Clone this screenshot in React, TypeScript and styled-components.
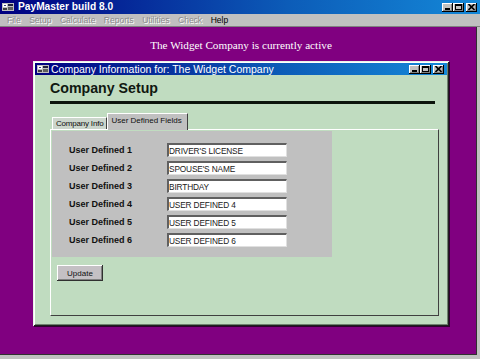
import React from 'react';
import styled, { createGlobalStyle } from 'styled-components';

const Global = createGlobalStyle`
  html, body { margin: 0; padding: 0; background: #c0c0c0; }
  body { width: 480px; height: 359px; overflow: hidden; font-family: "Liberation Sans", Arial, sans-serif; }
  * { box-sizing: border-box; }
`;

const Screen = styled.div`
  width: 480px;
  height: 359px;
  display: flex;
  flex-direction: column;
  background: #c0c0c0;
`;

const TitleBar = styled.div<{ $h: number; $size: number; $bold?: boolean }>`
  height: ${p => p.$h}px;
  flex: none;
  display: flex;
  align-items: center;
  padding: 0 3px 0 2px;
  background: linear-gradient(90deg, #000080 0%, #0c5cb8 60%, #1488d8 100%);
  color: #fff;
  font-size: ${p => p.$size}px;
  font-weight: ${p => (p.$bold ? 700 : 400)};
  white-space: nowrap;
`;

const TitleText = styled.span<{ $gap: number }>`
  margin-left: ${p => p.$gap}px;
  line-height: 1;
`;

const Controls = styled.div`
  margin-left: auto;
  display: flex;
  align-items: center;
`;

const WinButton = styled.div<{ $gap?: number }>`
  width: 11px;
  height: 9px;
  margin-left: ${p => p.$gap ?? 0}px;
  background: #c0c0c0;
  box-shadow: inset -1px -1px #000, inset 1px 1px #fff, inset -2px -2px #808080;
  display: flex;
  align-items: center;
  justify-content: center;
`;

const MenuBar = styled.div`
  height: 13px;
  flex: none;
  display: flex;
  align-items: center;
  gap: 8.5px;
  padding-left: 7px;
  font-size: 8.5px;
  border-bottom: 1px solid #808080;
`;

const MenuItem = styled.span<{ $disabled?: boolean }>`
  color: ${p => (p.$disabled ? '#8c8c8c' : '#000')};
  text-shadow: ${p => (p.$disabled ? '1px 1px 0 #fff' : 'none')};
  line-height: 1;
`;

const MdiClient = styled.div`
  flex: 1;
  margin: 0 3px 4px 0;
  background: #800080;
  border-right: 1px solid #303030;
  border-bottom: 1px solid #303030;
  display: flex;
  flex-direction: column;
`;

const Banner = styled.div`
  padding-top: 12px;
  padding-left: 6px;
  height: 34px;
  text-align: center;
  font-family: "Liberation Serif", "Times New Roman", serif;
  font-size: 11.2px;
  line-height: 13px;
  color: #fff;
`;

const ChildWindow = styled.div`
  margin-left: 33px;
  width: 416px;
  height: 265px;
  padding: 2px;
  background: #c0dcc0;
  box-shadow: inset 1px 1px #e8f4e8, inset -1px -1px #202020, inset 2px 2px #ffffff, inset -2px -2px #708070,
    1px 1px 0 #300030;
  display: flex;
  flex-direction: column;
`;

const Content = styled.div`
  flex: 1;
  padding: 5px 0 0 15px;
  display: flex;
  flex-direction: column;
  align-items: flex-start;
`;

const Heading = styled.div`
  font-size: 14.2px;
  font-weight: 700;
  line-height: 16px;
  color: #101810;
`;

const Rule = styled.div`
  margin-top: 5px;
  width: 385px;
  height: 3px;
  background: #0c140c;
`;

const TabStrip = styled.div`
  margin-top: 9px;
  margin-left: 2px;
  height: 16px;
  display: flex;
  align-items: flex-end;
  position: relative;
  z-index: 1;
`;

const Tab = styled.div<{ $active?: boolean }>`
  height: ${p => (p.$active ? 17 : 12)}px;
  margin-bottom: ${p => (p.$active ? -1 : 0)}px;
  padding: ${p => (p.$active ? '2px 5px 0 3px' : '1px 3px 0 3px')};
  background: ${p => (p.$active ? '#c0c0c0' : '#ccd6cc')};
  border-top: 1px solid #fff;
  border-left: 1px solid #fff;
  border-right: 1px solid #404040;
  font-size: 8px;
  letter-spacing: ${p => (p.$active ? '0' : '-0.2px')};
  line-height: 10px;
  color: #101010;
  white-space: nowrap;
`;

const TabPage = styled.div`
  width: 389px;
  height: 187px;
  border-top: 1px solid #fff;
  border-left: 1px solid #fff;
  border-right: 1px solid #404040;
  border-bottom: 1px solid #404040;
  padding: 1px 0 0 1px;
`;

const FieldPanel = styled.div`
  width: 280px;
  height: 126px;
  background: #c0c0c0;
  padding: 12px 0 0 17px;
  display: grid;
  grid-template-columns: 98px 120px;
  grid-auto-rows: 14px;
  row-gap: 4px;
`;

const FieldLabel = styled.div`
  align-self: center;
  font-size: 9px;
  font-weight: 700;
  color: #101010;
  white-space: nowrap;
`;

const FieldInput = styled.input`
  width: 120px;
  height: 14px;
  margin: 0;
  padding: 0;
  background: #fff;
  border-top: 2px solid #606060;
  border-left: 2px solid #606060;
  border-right: 1px solid #e0e0e0;
  border-bottom: 1px solid #e0e0e0;
  font-family: "Liberation Sans", Arial, sans-serif;
  font-size: 8.3px;
  letter-spacing: -0.15px;
  color: #202020;
  outline: none;
`;

const UpdateButton = styled.button`
  margin: 8px 0 0 5px;
  width: 46px;
  height: 16px;
  padding: 0;
  background: #c4c0c4;
  border: none;
  box-shadow: inset -1px -1px #303030, inset 1px 1px #fff, inset -2px -2px #808080;
  font-family: "Liberation Sans", Arial, sans-serif;
  font-size: 8px;
  color: #101010;
`;

const AppIcon = () => (
  <svg width="12" height="10" viewBox="0 0 12 10">
    <rect x="0" y="1" width="12" height="8" fill="#c0c0c0" />
    <rect x="1" y="2" width="4" height="3" fill="#fff" />
    <rect x="2" y="3" width="2" height="1" fill="#404080" />
    <rect x="6" y="2" width="5" height="2" fill="#202040" />
    <rect x="6" y="5" width="5" height="3" fill="#606060" />
    <rect x="1" y="6" width="4" height="2" fill="#404040" />
  </svg>
);

const MinGlyph = () => (
  <svg width="6" height="5" viewBox="0 0 6 5">
    <rect x="0" y="3" width="5" height="2" fill="#000" />
  </svg>
);
const MaxGlyph = () => (
  <svg width="7" height="6" viewBox="0 0 7 6">
    <rect x="0.5" y="0.5" width="6" height="5" fill="none" stroke="#000" strokeWidth="1" />
    <rect x="0" y="0" width="7" height="2" fill="#000" />
  </svg>
);
const CloseGlyph = () => (
  <svg width="7" height="6" viewBox="0 0 7 6">
    <path d="M0.5 0 L6.5 6 M6.5 0 L0.5 6" stroke="#000" strokeWidth="1.6" />
  </svg>
);

const WindowControls = () => (
  <Controls>
    <WinButton><MinGlyph /></WinButton>
    <WinButton><MaxGlyph /></WinButton>
    <WinButton $gap={2}><CloseGlyph /></WinButton>
  </Controls>
);

const fields = [
  { label: 'User Defined 1', value: "DRIVER'S LICENSE" },
  { label: 'User Defined 2', value: "SPOUSE'S NAME" },
  { label: 'User Defined 3', value: 'BIRTHDAY' },
  { label: 'User Defined 4', value: 'USER DEFINED 4' },
  { label: 'User Defined 5', value: 'USER DEFINED 5' },
  { label: 'User Defined 6', value: 'USER DEFINED 6' },
];

const menus = [
  { name: 'File', disabled: true },
  { name: 'Setup', disabled: true },
  { name: 'Calculate', disabled: true },
  { name: 'Reports', disabled: true },
  { name: 'Utilities', disabled: true },
  { name: 'Check', disabled: true },
  { name: 'Help', disabled: false },
];

export default function App() {
  return (
    <>
      <Global />
      <Screen>
        <TitleBar $h={14} $size={10.2} $bold>
          <AppIcon />
          <TitleText $gap={4}>PayMaster build 8.0</TitleText>
          <WindowControls />
        </TitleBar>
        <MenuBar>
          {menus.map(m => (
            <MenuItem key={m.name} $disabled={m.disabled}>{m.name}</MenuItem>
          ))}
        </MenuBar>
        <MdiClient>
          <Banner>The Widget Company is currently active</Banner>
          <ChildWindow>
            <TitleBar $h={12} $size={10.5}>
              <AppIcon />
              <TitleText $gap={2}>Company Information for: The Widget Company</TitleText>
              <WindowControls />
            </TitleBar>
            <Content>
              <Heading>Company Setup</Heading>
              <Rule />
              <TabStrip>
                <Tab>Company Info</Tab>
                <Tab $active>User Defined Fields</Tab>
              </TabStrip>
              <TabPage>
                <FieldPanel>
                  {fields.map(f => (
                    <React.Fragment key={f.label}>
                      <FieldLabel>{f.label}</FieldLabel>
                      <FieldInput readOnly value={f.value} />
                    </React.Fragment>
                  ))}
                </FieldPanel>
                <UpdateButton>Update</UpdateButton>
              </TabPage>
            </Content>
          </ChildWindow>
        </MdiClient>
      </Screen>
    </>
  );
}
